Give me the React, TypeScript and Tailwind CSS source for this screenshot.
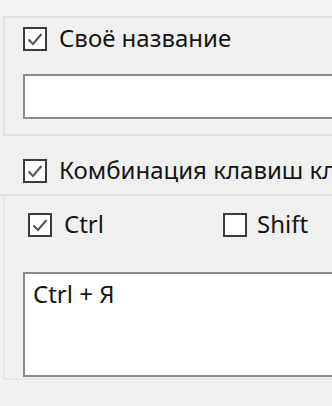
import React from 'react';

const Box: React.FC<{ checked?: boolean }> = ({ checked }) => (
  <div className="w-[24px] h-[24px] border-2 border-[#3c3c3c] bg-white flex items-center justify-center shrink-0">
    {checked && (
      <svg width="20" height="20" viewBox="0 0 20 20" fill="none">
        <path d="M3.5 10.5 L8 15 L16.5 5" stroke="#555" strokeWidth="2" />
      </svg>
    )}
  </div>
);

const App: React.FC = () => {
  return (
    <div
      className="w-[332px] h-[406px] overflow-hidden bg-[#f0f0f0] text-[#151515] text-[24px] leading-none"
      style={{ fontFamily: '"Noto Sans", "Open Sans", sans-serif' }}
    >
      <div className="h-[16px] bg-[#f3f3f3]" />

      {/* Custom name group */}
      <div className="ml-[3px] h-[120px] border-t-2 border-l-2 border-b-2 border-[#e2e2e2] pl-[18px] pt-[9px]">
        <div className="flex items-center gap-[12px] h-[24px]">
          <Box checked />
          <span className="mt-[-3px]">Своё название</span>
        </div>
        <div className="mt-[23px] w-[330px] h-[45px] border-2 border-[#8a8a8a] bg-white" />
      </div>

      {/* Key combination */}
      <div className="mt-[23px] flex items-center gap-[12px] h-[24px] pl-[23px] whitespace-nowrap">
        <Box checked />
        <span className="mt-[-3px]">Комбинация клавиш клавиатуры</span>
      </div>

      <div className="mt-[11px] border-t-2 border-[#e2e2e2]">
        <div className="ml-[3px] h-[184px] border-l-2 border-b-2 border-[#e6e6e6] pt-[17px]">
          <div className="flex items-center h-[24px] pl-[23px]">
            <div className="flex items-center gap-[12px] w-[195px]">
              <Box checked />
              <span className="mt-[-3px]">Ctrl</span>
            </div>
            <div className="flex items-center gap-[10px]">
              <Box />
              <span className="mt-[-3px]">Shift</span>
            </div>
          </div>
          <div className="mt-[35px] ml-[18px] w-[330px] h-[105px] border-2 border-[#8a8a8a] bg-white px-[8px] pt-[8px]">
            Ctrl + Я
          </div>
        </div>
      </div>
    </div>
  );
};

export default App;
